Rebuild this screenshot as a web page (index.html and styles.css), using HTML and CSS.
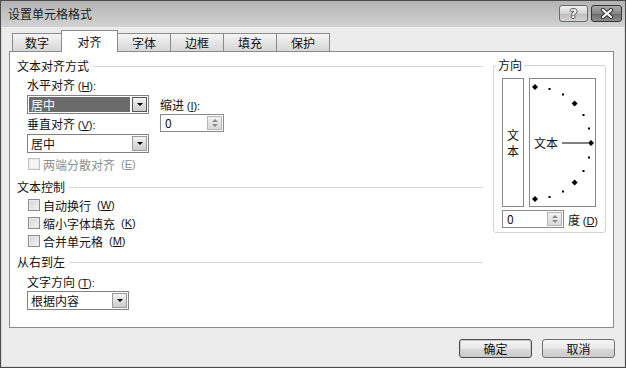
FILE: index.html
```html
<!DOCTYPE html>
<html lang="zh-CN">
<head>
    <meta charset="UTF-8">
    <meta name="viewport" content="width=device-width, initial-scale=1.0">
    <title>设置单元格格式</title>
    <link rel="stylesheet" href="styles.css">
</head>
<body>
    <div class="dialog">
        <div class="titlebar">
            <span class="title">设置单元格格式</span>
            <div class="caption">
                <div class="cap help">?</div>
                <div class="cap close">
                    <svg width="14" height="11" viewBox="0 0 14 11">
                        <path d="M3 2 L11 9 M11 2 L3 9" stroke="#333" stroke-width="4.2" stroke-linecap="round"/>
                        <path d="M3 2 L11 9 M11 2 L3 9" stroke="#fff" stroke-width="2.2" stroke-linecap="round"/>
                    </svg>
                </div>
            </div>
        </div>
        <div class="client">
            <div class="tabs">
                <div class="tab">数字</div>
                <div class="tab active">对齐</div>
                <div class="tab">字体</div>
                <div class="tab">边框</div>
                <div class="tab">填充</div>
                <div class="tab">保护</div>
            </div>
            <div class="panel">
                <div class="left">
                    <div class="section-title first">文本对齐方式</div>
                    <div class="align-grid">
                        <div class="align-col">
                            <div class="field-label">水平对齐 <span class="key">(<u>H</u>):</span></div>
                            <div class="combo wide focus">
                                <span class="value selected">居中</span>
                                <span class="drop"><i class="tri"></i></span>
                            </div>
                            <div class="field-label second">垂直对齐 <span class="key">(<u>V</u>):</span></div>
                            <div class="combo wide">
                                <span class="value">居中</span>
                                <span class="drop"><i class="tri"></i></span>
                            </div>
                        </div>
                        <div class="indent-col">
                            <div class="field-label">缩进 <span class="key">(<u>I</u>):</span></div>
                            <div class="spin indent">
                                <span class="value">0</span>
                                <span class="spin-btn"><i class="up"></i><i class="down"></i></span>
                            </div>
                        </div>
                    </div>
                    <div class="check disabled"><span class="box"></span>两端分散对齐 <span class="key">(<u>E</u>)</span></div>

                    <div class="section-title control">文本控制</div>
                    <div class="check first-check"><span class="box"></span>自动换行 <span class="key">(<u>W</u>)</span></div>
                    <div class="check"><span class="box"></span>缩小字体填充 <span class="key">(<u>K</u>)</span></div>
                    <div class="check"><span class="box"></span>合并单元格 <span class="key">(<u>M</u>)</span></div>

                    <div class="section-title rtl">从右到左</div>
                    <div class="field-label dir">文字方向 <span class="key">(<u>T</u>):</span></div>
                    <div class="combo narrow">
                        <span class="value">根据内容</span>
                        <span class="drop"><i class="tri"></i></span>
                    </div>
                </div>

                <fieldset class="orient">
                    <legend>方向</legend>
                    <div class="orient-boxes">
                        <div class="vbox"><span>文</span><span>本</span></div>
                        <div class="dial">
                            <svg width="65" height="127" viewBox="0 0 65 127">
                                <g fill="#000">
                                    <path d="M5 5 L8 8 L5 11 L2 8 Z"/>
                                    <path d="M44.6 21.4 L47.6 24.4 L44.6 27.4 L41.6 24.4 Z"/>
                                    <path d="M61 61 L64 64 L61 67 L58 64 Z"/>
                                    <path d="M44.6 100.6 L47.6 103.6 L44.6 106.6 L41.6 103.6 Z"/>
                                    <path d="M5 117 L8 120 L5 123 L2 120 Z"/>
                                    <rect x="18.5" y="9" width="2" height="2"/>
                                    <rect x="32" y="14.5" width="2" height="2"/>
                                    <rect x="52.5" y="35" width="2" height="2"/>
                                    <rect x="58" y="48.5" width="2" height="2"/>
                                    <rect x="58" y="77.5" width="2" height="2"/>
                                    <rect x="52.5" y="91" width="2" height="2"/>
                                    <rect x="32" y="111.5" width="2" height="2"/>
                                    <rect x="18.5" y="117" width="2" height="2"/>
                                </g>
                                <text x="4" y="68.5" class="dial-text">文本</text>
                                <line x1="32" y1="64" x2="58" y2="64" stroke="#000" stroke-width="1"/>
                            </svg>
                        </div>
                    </div>
                    <div class="degree-row">
                        <div class="spin degree">
                            <span class="value">0</span>
                            <span class="spin-btn"><i class="up"></i><i class="down"></i></span>
                        </div>
                        <span class="deg">度 <span class="key">(<u>D</u>)</span></span>
                    </div>
                </fieldset>
            </div>
            <div class="footer">
                <button class="btn default">确定</button>
                <button class="btn">取消</button>
            </div>
        </div>
    </div>
</body>
</html>
```

FILE: styles.css
```css
* {
    box-sizing: border-box;
}
body {
    margin: 0;
    background: #fff;
    color: #111;
    font-family: "Noto Sans CJK SC", "Noto Sans", sans-serif;
    font-size: 12px;
}
.key {
    font-family: "Liberation Sans", sans-serif;
    font-size: 11px;
    white-space: nowrap;
}
u {
    text-underline-offset: 1px;
}
.dialog {
    width: 626px;
    height: 368px;
    border: 1px solid #4a4a4a;
    background: #ececec;
    display: flex;
    flex-direction: column;
    box-shadow: inset 0 0 0 1px #dadada;
}
.titlebar {
    height: 26px;
    flex: none;
    display: flex;
    justify-content: space-between;
    align-items: flex-start;
    padding: 4px 3px 0 7px;
    background: linear-gradient(#b4b4b4, #c6c6c6 60%, #d2d2d2);
}
.title {
    line-height: 18px;
    color: #1a1a1a;
}
.caption {
    display: flex;
    gap: 3px;
}
.cap {
    height: 17px;
    border: 1px solid #6a6a6a;
    border-radius: 3px;
    display: flex;
    align-items: center;
    justify-content: center;
}
.cap.help {
    width: 29px;
    background: linear-gradient(#f2f2f2, #d2d2d2 50%, #bdbdbd 51%, #d4d4d4);
    color: #f6f6f6;
    font-family: "DejaVu Sans", sans-serif;
    font-size: 13px;
    font-weight: bold;
    text-shadow: 1px 0 0 #555, -1px 0 0 #555, 0 1px 0 #555, 0 -1px 0 #555;
}
.cap.close {
    width: 31px;
    border-color: #353535;
    background: linear-gradient(#acacac, #838383 50%, #6c6c6c 51%, #8c8c8c);
}

.client {
    flex: 1;
    display: flex;
    flex-direction: column;
    padding: 0 11px 0 8px;
}
.tabs {
    height: 24px;
    flex: none;
    display: flex;
    align-items: flex-end;
    padding-left: 3px;
}
.tab {
    width: 53px;
    height: 18px;
    border: 1px solid #8a8a8a;
    border-left: none;
    border-bottom: none;
    background: linear-gradient(#f6f6f6, #e2e2e2 60%, #d8d8d8);
    display: flex;
    align-items: center;
    justify-content: center;
    line-height: 1;
}
.tab:first-child {
    width: 50px;
    border-left: 1px solid #8a8a8a;
}
.tab.active {
    width: 57px;
    height: 22px;
    margin-left: -1px;
    margin-bottom: -1px;
    border-left: 1px solid #8a8a8a;
    background: #fff;
    position: relative;
    z-index: 1;
}

.panel {
    height: 277px;
    flex: none;
    background: #fff;
    border: 1px solid #8a8a8a;
    display: flex;
    align-items: flex-start;
    gap: 10px;
    padding: 0 7px;
}
.left {
    width: 466px;
    display: flex;
    flex-direction: column;
    align-items: flex-start;
}
.section-title {
    align-self: stretch;
    display: flex;
    align-items: center;
    gap: 4px;
    line-height: 14px;
}
.section-title::after {
    content: "";
    flex: 1;
    border-top: 1px solid #d8d8d8;
}
.section-title.first {
    margin-top: 7px;
}
.section-title.control {
    margin-top: 7px;
}
.section-title.rtl {
    margin-top: 5px;
}
.field-label {
    line-height: 14px;
    white-space: nowrap;
}
.field-label.second {
    margin-top: 3px;
}
.field-label.dir {
    margin: 6px 0 0 10px;
}

.align-grid {
    display: flex;
    gap: 11px;
    margin: 5px 0 0 10px;
}
.align-col {
    display: flex;
    flex-direction: column;
    align-items: flex-start;
}
.indent-col {
    margin-top: 20px;
}

.combo {
    height: 19px;
    margin-top: 2px;
    display: flex;
    border: 1px solid #828282;
    background: #fff;
}
.combo.wide {
    width: 122px;
}
.combo.narrow {
    width: 102px;
    margin: 1px 0 0 10px;
}
.combo .value {
    flex: 1;
    padding-left: 3px;
    line-height: 17px;
}
.combo .value.selected {
    margin: 1px;
    padding-left: 2px;
    line-height: 15px;
    background: #6b6b6b;
    color: #fff;
}
.drop {
    width: 15px;
    border: 1px solid #9a9a9a;
    margin: 1px;
    background: linear-gradient(#f4f4f4, #dedede 50%, #cdcdcd);
    display: flex;
    align-items: center;
    justify-content: center;
}
.combo.focus .drop {
    border-color: #555;
}
.tri {
    width: 0;
    height: 0;
    border-left: 3px solid transparent;
    border-right: 3px solid transparent;
    border-top: 3px solid #000;
}

.spin {
    height: 18px;
    flex: none;
    display: flex;
    border: 1px solid #8a8a8a;
    background: #fff;
}
.spin.indent {
    width: 64px;
    margin-top: 1px;
}
.spin.degree {
    width: 62px;
}
.spin .value {
    flex: 1;
    padding-left: 4px;
    line-height: 16px;
}
.spin-btn {
    width: 15px;
    margin: 1px;
    border: 1px solid #b5b5b5;
    background: linear-gradient(#f2f2f2, #d8d8d8);
    display: flex;
    flex-direction: column;
    align-items: center;
    justify-content: center;
    gap: 2px;
}
.spin-btn .up,
.spin-btn .down {
    width: 0;
    height: 0;
    border-left: 3px solid transparent;
    border-right: 3px solid transparent;
}
.spin-btn .up {
    border-bottom: 3px solid #8a8a8a;
}
.spin-btn .down {
    border-top: 3px solid #8a8a8a;
}

.check {
    height: 18px;
    display: flex;
    align-items: center;
    gap: 3px;
    margin-left: 11px;
    white-space: nowrap;
}
.check .key {
    margin-left: 3px;
}
.check.disabled {
    margin-top: 2px;
    color: #8e8e8e;
}
.check.first-check {
    margin-top: 2px;
}
.box {
    width: 12px;
    height: 12px;
    border: 1px solid #8c8c8c;
    background: linear-gradient(135deg, #d4d4d4, #f4f4f4);
    box-shadow: inset 0 0 0 1px #eaeaea;
}
.check.disabled .box {
    border-color: #c2c2c2;
    background: #f5f5f5;
}

.orient {
    width: 113px;
    min-width: 0;
    margin: 6px 0 0 0;
    padding: 6px 9px 4px 8px;
    border: 1px solid #d3d3d3;
    border-radius: 3px;
}
.orient legend {
    margin-left: -6px;
    padding: 0 2px;
    line-height: 14px;
}
.orient-boxes {
    height: 129px;
    display: flex;
    gap: 5px;
}
.vbox {
    width: 22px;
    border: 1px solid #8a8a8a;
    display: flex;
    flex-direction: column;
    align-items: center;
    justify-content: center;
    line-height: 16px;
}
.dial {
    width: 67px;
    border: 1px solid #8a8a8a;
}
.dial svg {
    display: block;
}
.dial-text {
    font-family: "Noto Sans CJK SC", sans-serif;
    font-size: 12px;
    fill: #111;
}
.degree-row {
    margin-top: 3px;
    display: flex;
    align-items: center;
    gap: 4px;
    white-space: nowrap;
}

.footer {
    display: flex;
    justify-content: flex-end;
    gap: 10px;
    padding-top: 11px;
    margin-right: -1px;
}
.btn {
    width: 73px;
    height: 19px;
    padding: 0;
    border: 1px solid #707070;
    border-radius: 3px;
    background: linear-gradient(#f6f6f6, #e8e8e8 50%, #d9d9d9 51%, #cdcdcd);
    font: inherit;
    color: #111;
    line-height: 1;
}
.btn.default {
    border-color: #4a4a4a;
    box-shadow: inset 0 0 0 1px #c8c8c8;
}
```
